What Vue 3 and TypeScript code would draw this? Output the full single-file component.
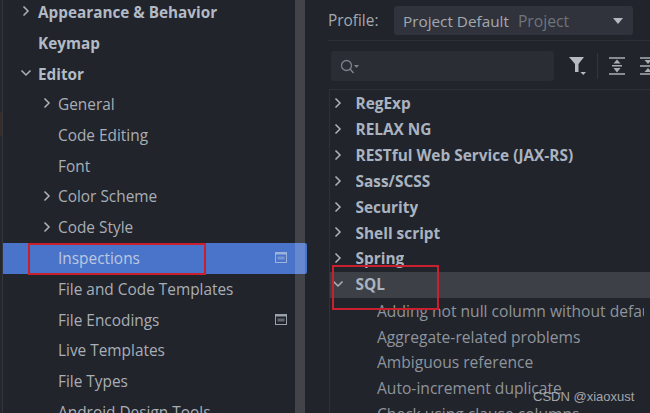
<script setup lang="ts">
interface NavRow { label: string; level: number; arrow?: 'right' | 'down'; bold?: boolean; selected?: boolean; badge?: boolean }
interface TreeRow { label: string; arrow?: 'right' | 'down'; child?: boolean; hover?: boolean }

const nav: NavRow[] = [
  { label: 'Appearance & Behavior', level: 0, arrow: 'right', bold: true },
  { label: 'Keymap', level: 0, bold: true },
  { label: 'Editor', level: 0, arrow: 'down', bold: true },
  { label: 'General', level: 1, arrow: 'right' },
  { label: 'Code Editing', level: 1 },
  { label: 'Font', level: 1 },
  { label: 'Color Scheme', level: 1, arrow: 'right' },
  { label: 'Code Style', level: 1, arrow: 'right' },
  { label: 'Inspections', level: 1, selected: true, badge: true },
  { label: 'File and Code Templates', level: 1 },
  { label: 'File Encodings', level: 1, badge: true },
  { label: 'Live Templates', level: 1 },
  { label: 'File Types', level: 1 },
  { label: 'Android Design Tools', level: 1 }
]

const tree: TreeRow[] = [
  { label: 'RegExp', arrow: 'right' },
  { label: 'RELAX NG', arrow: 'right' },
  { label: 'RESTful Web Service (JAX-RS)', arrow: 'right' },
  { label: 'Sass/SCSS', arrow: 'right' },
  { label: 'Security', arrow: 'right' },
  { label: 'Shell script', arrow: 'right' },
  { label: 'Spring', arrow: 'right' },
  { label: 'SQL', arrow: 'down', hover: true },
  { label: 'Adding not null column without default value', child: true },
  { label: 'Aggregate-related problems', child: true },
  { label: 'Ambiguous reference', child: true },
  { label: 'Auto-increment duplicate', child: true },
  { label: 'Check using clause columns', child: true }
]
</script>

<template>
  <div class="page">
    <aside class="side">
      <div class="strip"><span class="strip-tint"></span></div>
      <div class="nav">
        <div
          v-for="r in nav"
          :key="r.label"
          class="nav-row"
          :class="{ sel: r.selected, bold: r.bold, sub: r.level === 1 }"
        >
          <svg v-if="r.arrow" class="arrow" viewBox="0 0 12 12" width="12" height="12">
            <path v-if="r.arrow === 'right'" d="M3.5 1.5 L8 6 L3.5 10.5" />
            <path v-else d="M1.5 3.5 L6 8 L10.5 3.5" />
          </svg>
          <span class="nav-label">{{ r.label }}</span>
          <svg v-if="r.badge" class="badge" viewBox="0 0 12 11" width="12" height="11">
            <rect x="0.5" y="0.5" width="11" height="10" fill="none" stroke="currentColor" />
            <rect x="0" y="0" width="12" height="2.5" fill="currentColor" />
            <rect x="2.5" y="4.5" width="7" height="3" fill="currentColor" opacity="0.55" />
          </svg>
        </div>
      </div>
      <div class="scroll"></div>
    </aside>

    <main class="main">
      <div class="profile">
        <span class="profile-label">Profile:</span>
        <div class="combo">
          <span class="combo-name">Project Default</span>
          <span class="combo-kind">Project</span>
          <svg class="combo-caret" viewBox="0 0 10 6" width="10" height="6"><path d="M0 0 H10 L5 6 Z" /></svg>
        </div>
      </div>
      <div class="tools">
        <div class="search">
          <svg viewBox="0 0 20 16" width="20" height="16">
            <circle cx="6.5" cy="6.5" r="5" fill="none" stroke="#7d828a" stroke-width="1.3" />
            <path d="M10 10 L13.5 14" stroke="#7d828a" stroke-width="1.5" />
            <path d="M14 6 H19 L16.5 9 Z" fill="#7d828a" />
          </svg>
        </div>
        <div class="tool-icons">
          <svg viewBox="0 0 20 20" width="20" height="20" class="filter">
            <path d="M1 1 H16 L10.5 8 V16 H7 V8 Z" fill="#b6bbc2" />
            <path d="M12.5 16 H18 L15.2 19 Z" fill="#b6bbc2" />
          </svg>
          <span class="sep"></span>
          <svg viewBox="0 0 16 18" width="16" height="18" class="expand">
            <path d="M0 1 H16 M0 17 H16 M3 8.8 H13" stroke="#a9aeb5" stroke-width="1.6" />
            <path d="M8 2.5 L11.5 6.5 H4.5 Z M8 15.5 L11.5 11 H4.5 Z" fill="#a9aeb5" />
          </svg>
          <svg viewBox="0 0 16 18" width="16" height="18" class="collapse">
            <path d="M0 1 H16 M0 17 H16 M0 9 H16" stroke="#a9aeb5" stroke-width="1.6" />
            <path d="M8 7 L11.5 3 H4.5 Z M8 11 L11.5 15 H4.5 Z" fill="#a9aeb5" />
          </svg>
        </div>
      </div>
      <div class="tree">
        <div v-for="t in tree" :key="t.label" class="tree-row" :class="{ hover: t.hover, child: t.child }">
          <svg v-if="t.arrow" class="arrow tree-arrow" viewBox="0 0 12 12" width="12" height="12">
            <path v-if="t.arrow === 'right'" d="M3.5 1.5 L8 6 L3.5 10.5" />
            <path v-else d="M1.5 3.5 L6 8 L10.5 3.5" />
          </svg>
          <span class="tree-label">{{ t.label }}</span>
        </div>
      </div>
    </main>

    <div class="mark mark-a"></div>
    <div class="mark mark-b"></div>
    <div class="watermark">CSDN @xiaoxust</div>
  </div>
</template>

<style>
html, body { margin: 0; background: #21242b; }
</style>

<style scoped>
.page {
  position: relative;
  display: flex;
  width: 650px;
  height: 413px;
  overflow: hidden;
  background: #21242b;
  font-family: "Open Sans", "Noto Sans", sans-serif;
}
.side {
  display: flex;
  flex: 0 0 305px;
  position: relative;
  z-index: 2;
}
.strip {
  flex: 0 0 3px;
  background: #24272d;
  border-right: 1px solid #33363c;
  box-sizing: border-box;
  position: relative;
}
.strip-tint {
  position: absolute;
  left: 0;
  top: 112px;
  width: 2px;
  height: 24px;
  background: #3a2d28;
}
.nav {
  flex: 1;
  margin-top: -3px;
  position: relative;
  z-index: 1;
}
.nav-row {
  display: flex;
  align-items: center;
  height: 30.8px;
  box-sizing: border-box;
  margin-right: -2px;
  padding: 0 0 0.5px 35px;
  font-size: 15.3px;
  color: #a9aeb6;
  position: relative;
}
.nav-row.sub { padding-left: 55px; font-size: 15.4px; }
.nav-row.bold { font-weight: 700; color: #b2bac6; }
.nav-row.sel { background: #4a74c9; color: #bcc8e2; border-radius: 0 2px 2px 0; }
.nav-row .arrow {
  position: absolute;
  left: 17px;
  top: 8px;
}
.nav-row.sub .arrow { left: 38px; }
.nav-label { white-space: nowrap; }
.arrow path {
  fill: none;
  stroke: #aeb3ba;
  stroke-width: 1.5;
}
.badge {
  position: absolute;
  left: 272px;
  top: 9px;
  color: #9aa0a8;
}
.sel .badge { color: #9db2dc; }
.scroll {
  position: absolute;
  left: 295px;
  top: 0;
  bottom: 0;
  width: 10px;
  background: rgba(255, 255, 255, 0.15);
  z-index: 2;
}
.main {
  flex: 1;
  min-width: 0;
  padding: 6px 0 0 23px;
  position: relative;
  z-index: 1;
  background: #21242b;
}
.profile {
  display: flex;
  align-items: center;
  height: 29px;
  border-bottom: 1px solid #2c2f36;
  padding-bottom: 5px;
}
.profile-label {
  flex: 0 0 66px;
  font-size: 15.4px;
  color: #a4a9b1;
}
.combo {
  display: flex;
  align-items: center;
  width: 239px;
  height: 29px;
  box-sizing: border-box;
  padding-left: 9px;
  background: #30333b;
  border-radius: 3px;
  font-size: 15.3px;
  position: relative;
}
.combo-name { color: #a4a9b1; }
.combo-kind { color: #6f747c; margin-left: 9px; font-size: 15.7px; }
.combo-caret {
  position: absolute;
  right: 10px;
  top: 12px;
  fill: #b4b9c0;
}
.tools {
  display: flex;
  align-items: center;
  height: 30px;
  margin-top: 10px;
  padding-left: 3px;
}
.search {
  flex: 0 0 223px;
  height: 30px;
  box-sizing: border-box;
  padding: 8px 0 0 9px;
  background: #2a2d34;
  border-radius: 3px;
}
.search svg { display: block; }
.tool-icons {
  display: flex;
  align-items: center;
  margin-left: 14px;
}
.filter { flex: none; }
.sep {
  flex: none;
  width: 1px;
  height: 26px;
  margin: 0 11px 0 9px;
  background: #33363d;
}
.expand { flex: none; margin-right: 15px; }
.collapse { flex: none; }
.tree {
  margin: 8px 0 0 1px;
  border-top: 1px solid #2e3138;
  border-left: 1px solid #2e3138;
  padding-top: 1px;
}
.tree-row {
  display: flex;
  align-items: center;
  height: 25.9px;
  box-sizing: border-box;
  padding: 0 0 0.8px 25.5px;
  font-size: 15.4px;
  font-weight: 700;
  color: #aab3c0;
  white-space: nowrap;
  position: relative;
}
.tree-row.child {
  padding: 0 6px 0.8px 47px;
  font-size: 15.6px;
  font-weight: 400;
  color: #8f949c;
}
.tree-row.hover { background: #3d4046; }
.tree-label { overflow: hidden; }
.tree-arrow {
  position: absolute;
  left: 2px;
  top: 6px;
}
.mark {
  position: absolute;
  border: 2px solid #c8202f;
  box-sizing: border-box;
  z-index: 3;
}
.mark-a { left: 28px; top: 243px; width: 178px; height: 32px; }
.mark-b { left: 332px; top: 265px; width: 107px; height: 45px; }
.watermark {
  position: absolute;
  left: 533px;
  top: 389px;
  z-index: 4;
  font: 13px/16px "Liberation Sans", Arial, sans-serif;
  color: #a3a6ab;
}
</style>
